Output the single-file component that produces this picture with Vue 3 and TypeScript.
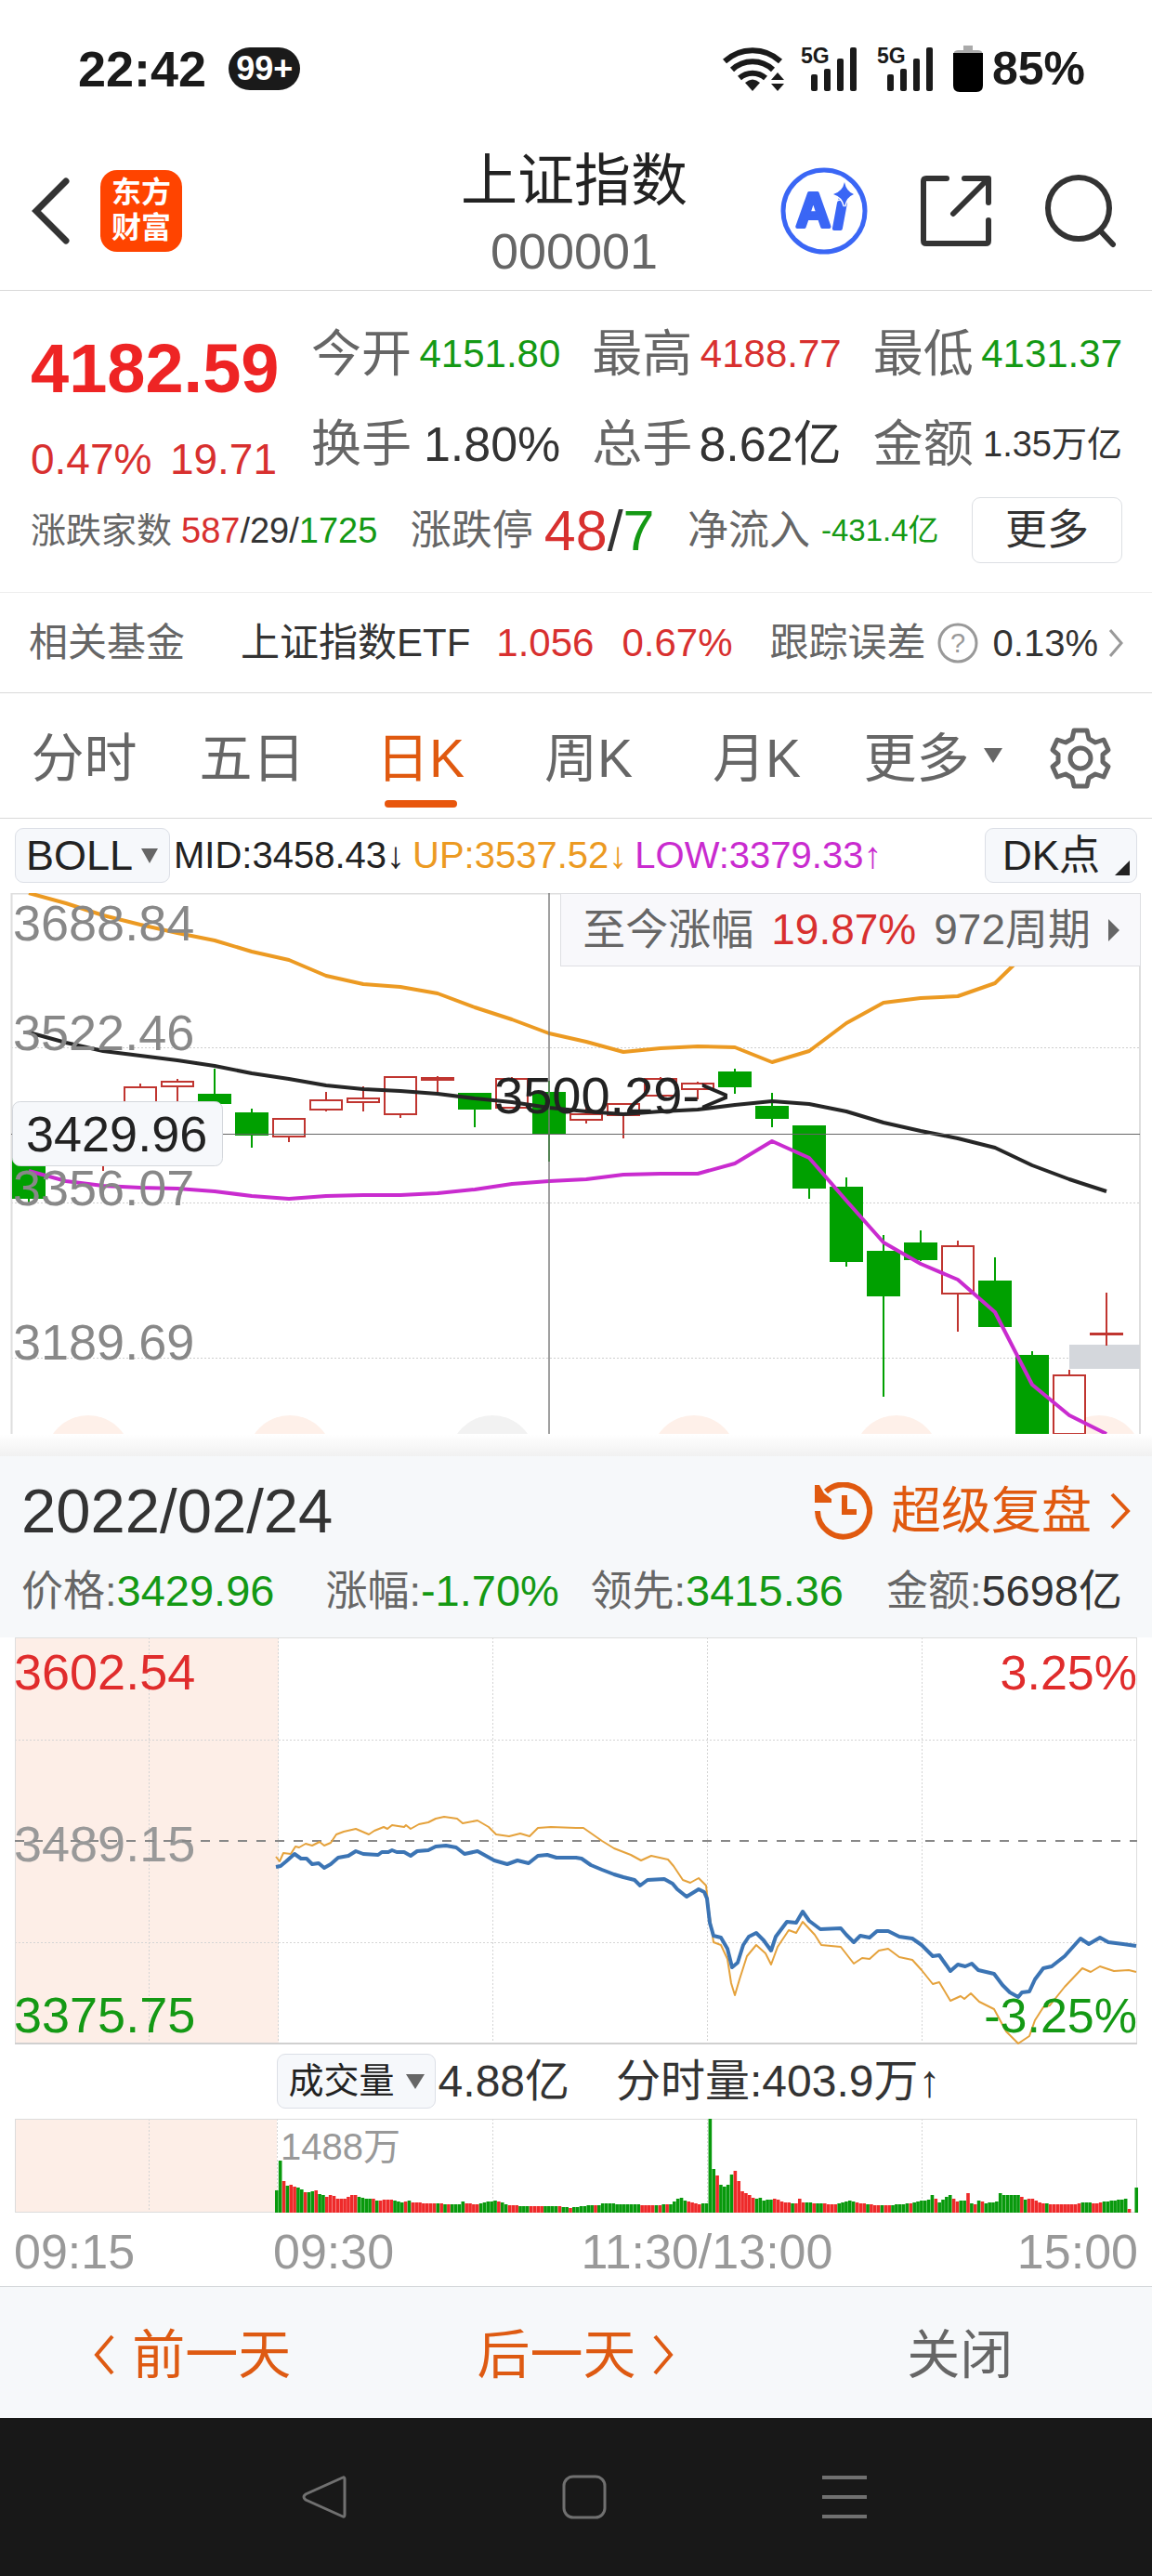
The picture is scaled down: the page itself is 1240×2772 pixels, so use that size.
<script setup lang="ts">
import { ref } from 'vue'

interface Quote { label: string; value: string; tone: string; size: string }
interface Candle { i: number; up: boolean; top: number; bottom: number; high: number; low: number }
interface Bar { x: number; h: number; up: boolean }

const quotes: Quote[] = [
  { label: '今开', value: '4151.80', tone: 'down', size: 'm' },
  { label: '最高', value: '4188.77', tone: 'up', size: 'm' },
  { label: '最低', value: '4131.37', tone: 'down', size: 'm' },
  { label: '换手', value: '1.80%', tone: 'ink', size: 'l' },
  { label: '总手', value: '8.62亿', tone: 'ink', size: 'l' },
  { label: '金额', value: '1.35万亿', tone: 'ink', size: 's' },
]

const tabs = ['分时', '五日', '日K', '周K', '月K']
const activeTab = ref('日K')
const indicator = ref('BOLL')
const subIndicator = ref('成交量')

const dayStats = [
  { label: '价格:', value: '3429.96', tone: 'down' },
  { label: '涨幅:', value: '-1.70%', tone: 'down' },
  { label: '领先:', value: '3415.36', tone: 'down' },
  { label: '金额:', value: '5698亿', tone: 'ink' },
]

/* Daily chart: one slot every 40 units, first slot centred at 31 */
const slotX = (i: number): number => 31 + i * 40
const toPoints = (ys: number[]): string => ys.map((y, i) => `${slotX(i)},${y}`).join(' ')

const candle = (i: number, up: boolean, top: number, bottom: number, high: number, low: number): Candle =>
  ({ i, up, top, bottom, high, low })

const candles: Candle[] = [
  candle(0, false, 1230, 1290, 1226, 1295),
  candle(2, true, 1215, 1240, 1210, 1261),
  candle(3, true, 1171, 1200, 1167, 1204),
  candle(4, true, 1165, 1170, 1162, 1190),
  candle(5, false, 1179, 1188, 1151, 1188),
  candle(6, false, 1199, 1222, 1194, 1236),
  candle(7, true, 1205, 1224, 1205, 1230),
  candle(8, true, 1185, 1195, 1176, 1197),
  candle(9, true, 1183, 1187, 1170, 1197),
  candle(10, true, 1160, 1200, 1160, 1204),
  candle(11, true, 1161, 1163, 1159, 1178),
  candle(12, false, 1178, 1194, 1178, 1214),
  candle(13, true, 1162, 1193, 1160, 1193),
  candle(14, false, 1177, 1221, 1164, 1251),
  candle(15, true, 1200, 1206, 1171, 1210),
  candle(16, true, 1189, 1201, 1189, 1226),
  candle(17, true, 1162, 1180, 1160, 1180),
  candle(18, true, 1167, 1173, 1165, 1184),
  candle(19, false, 1155, 1170, 1151, 1178),
  candle(20, false, 1192, 1204, 1177, 1214),
  candle(21, false, 1213, 1279, 1212, 1291),
  candle(22, false, 1279, 1358, 1268, 1364),
  candle(23, false, 1348, 1395, 1330, 1504),
  candle(24, false, 1339, 1356, 1325, 1358),
  candle(25, true, 1342, 1393, 1336, 1434),
  candle(26, false, 1380, 1428, 1354, 1429),
  candle(27, false, 1460, 1546, 1455, 1546),
  candle(28, true, 1481, 1544, 1475, 1544),
  candle(29, true, 1436, 1437, 1392, 1449),
]

const upperBand = toPoints([
  962, 973, 986, 996, 1005, 1013, 1025, 1034, 1051, 1060, 1063, 1070, 1085, 1098, 1113,
  1122, 1133, 1129, 1127, 1128, 1144, 1132, 1102, 1080, 1075, 1073, 1059, 1020,
])
const middleBand = toPoints([
  1112, 1123, 1132, 1137, 1142, 1148, 1156, 1162, 1169, 1173, 1175, 1178, 1183, 1187, 1193,
  1197, 1200, 1197, 1195, 1190, 1186, 1189, 1197, 1209, 1218, 1226, 1236, 1255, 1270, 1283,
])
const lowerBand = toPoints([
  1261, 1272, 1277, 1279, 1280, 1283, 1288, 1291, 1288, 1287, 1287, 1285, 1281, 1275, 1272,
  1270, 1265, 1264, 1264, 1253, 1229, 1247, 1293, 1338, 1361, 1378, 1413, 1491, 1524, 1544,
])

const markers = [95, 312, 530, 747, 965, 1183]

const leadLine = `297,1998 301,2003 305,1994 313,1995 318,1987 322,1988 329,1984 336,1986 344,1982 349,1986
  356,1983 362,1974 370,1971 383,1968 397,1974 403,1970 413,1966 417,1968 422,1964 435,1966 437,1964 442,1968
  451,1963 461,1961 469,1957 478,1955 492,1957 498,1962 514,1959 526,1966 534,1974 548,1976 560,1973 570,1976
  579,1967 593,1966 620,1967 628,1967 638,1974 648,1981 661,1989 679,1996 690,2002 701,1997 719,2001 725,2008
  735,2023 743,2026 752,2021 760,2029 763,2056 768,2090 776,2093 783,2108 787,2134 791,2147 796,2130 804,2105
  814,2093 824,2102 830,2114 837,2095 849,2077 857,2080 864,2068 877,2082 884,2093 905,2095 919,2113 928,2107
  936,2108 946,2099 956,2097 968,2106 982,2109 992,2120 1004,2135 1011,2133 1023,2153 1034,2148 1038,2151
  1045,2145 1054,2154 1070,2162 1083,2186 1096,2199 1108,2191 1114,2174 1123,2160 1130,2158 1146,2138
  1165,2118 1174,2122 1184,2116 1199,2121 1215,2120 1223,2122`

const priceLine = `297,2009 302,2008 308,2003 317,1995 324,2000 330,2000 336,2006 343,2005 349,2010 356,2006
  364,1999 375,1997 383,1992 391,1995 407,1996 411,1993 418,1993 422,1991 427,1993 435,1993 442,1997 449,1992
  461,1991 469,1987 480,1986 491,1988 500,1995 514,1992 532,2002 546,2006 557,2002 569,2005 579,1997 589,1996
  599,1999 620,1999 626,2000 636,2007 648,2012 661,2017 671,2020 683,2023 689,2029 697,2023 715,2022 724,2027
  729,2033 739,2041 752,2033 758,2036 761,2043 764,2069 768,2083 776,2085 783,2097 788,2117 794,2112 800,2093
  806,2084 814,2080 822,2088 830,2099 835,2084 847,2068 857,2069 864,2057 871,2067 883,2076 905,2075 911,2082
  919,2090 926,2083 936,2085 944,2078 956,2078 968,2084 982,2086 992,2093 1004,2105 1011,2104 1023,2121
  1031,2114 1039,2116 1046,2113 1053,2120 1070,2124 1079,2136 1087,2144 1096,2149 1100,2144 1108,2143
  1114,2130 1123,2118 1132,2116 1146,2105 1163,2086 1172,2092 1184,2085 1193,2090 1209,2092 1223,2094`

/* Minute volumes: [minute, height] knots, filled in between */
const volumeKnots: [number, number][] = [
  [0, 24], [1, 56], [2, 34], [3, 29], [4, 30], [5, 28], [6, 27], [7, 25], [8, 22], [9, 22], [10, 23], [11, 24],
  [12, 20], [13, 19], [14, 17], [15, 19], [16, 18], [17, 15], [19, 15], [20, 17], [21, 19], [22, 19], [23, 17],
  [25, 15], [27, 15], [28, 13], [32, 14], [35, 11], [37, 13], [38, 11], [43, 10], [49, 9], [51, 9], [52, 12],
  [53, 10], [56, 9], [58, 11], [61, 13], [65, 8], [70, 7], [78, 7], [82, 5], [87, 8], [90, 8], [91, 10],
  [97, 9], [105, 8], [110, 9], [112, 15], [113, 16], [114, 13], [118, 9], [120, 10], [121, 101], [122, 47],
  [123, 40], [124, 30], [125, 28], [126, 30], [127, 41], [128, 45], [129, 34], [130, 23], [132, 19], [133, 16],
  [134, 15], [135, 16], [136, 13], [139, 15], [142, 11], [145, 10], [146, 15], [147, 11], [151, 10], [156, 9],
  [160, 13], [163, 10], [167, 8], [171, 8], [177, 10], [179, 12], [182, 14], [183, 19], [184, 15], [185, 11],
  [187, 17], [188, 19], [189, 15], [190, 12], [192, 13], [193, 21], [194, 10], [195, 9], [196, 13], [198, 10],
  [201, 12], [202, 21], [203, 19], [207, 19], [209, 14], [211, 15], [213, 11], [216, 9], [223, 9], [225, 11],
  [229, 10], [231, 12], [234, 13], [237, 15], [238, 4], [239, 0], [240, 27],
]
const risingRuns: [number, number][] = [
  [2, 2], [4, 5], [8, 8], [11, 11], [14, 22], [27, 27], [29, 32], [36, 36], [38, 44], [46, 46], [48, 48],
  [53, 56], [62, 62], [65, 67], [71, 74], [79, 79], [82, 82], [89, 89], [102, 105], [107, 107], [109, 109],
  [115, 118], [123, 123], [128, 133], [139, 143], [145, 147], [150, 150], [153, 156], [162, 164], [166, 168],
  [170, 171], [177, 177], [184, 184], [189, 190], [193, 193], [195, 195], [197, 197], [208, 208], [210, 214],
  [216, 224], [228, 230], [238, 238],
]

function buildBars(): Bar[] {
  const bars: Bar[] = []
  for (let k = 0; k < volumeKnots.length; k++) {
    const [start, h0] = volumeKnots[k]
    const [end, h1] = volumeKnots[k + 1] ?? [start + 1, h0]
    for (let m = start; m < end; m++) {
      const h = Math.round(h0 + ((h1 - h0) * (m - start)) / (end - start))
      bars.push({ x: 296 + m * 3.856, h, up: risingRuns.some(([a, b]) => m >= a && m <= b) })
    }
  }
  return bars
}
const bars = buildBars()
</script>

<template>
  <div class="page">
    <div class="status">
      <span class="clock">22:42</span>
      <span class="count">99+</span>
      <span class="spacer"></span>
      <svg class="wifi" width="66" height="48" viewBox="0 0 66 48" aria-hidden="true">
        <g fill="none" stroke="#1a1a1a" stroke-width="6">
          <path d="M2 16a44 44 0 0 1 60 0" />
          <path d="M10 25a32 32 0 0 1 44 0" />
          <path d="M18 34a21 21 0 0 1 28 0" />
        </g>
        <path d="M24 39q8-7 16 0l-8 9z" fill="#1a1a1a" />
        <path d="M52 36l7-8 7 8zM52 40l7 8 7-8z" fill="#1a1a1a" />
      </svg>
      <svg v-for="n in 2" :key="n" class="signal" width="62" height="56" viewBox="0 -4 62 56" aria-hidden="true">
        <text x="0" y="18" font-size="23" font-weight="700" fill="#1a1a1a">5G</text>
        <rect x="11" y="30" width="7" height="18" rx="2" />
        <rect x="25" y="24" width="7" height="24" rx="2" />
        <rect x="39" y="13" width="7" height="35" rx="2" />
        <rect x="53" y="1" width="7" height="47" rx="2" />
      </svg>
      <svg width="32" height="50" viewBox="0 0 32 50" aria-hidden="true">
        <path d="M11 0h10v5h6q5 0 5 6H0q0-6 5-6h6z" fill="#aaa" />
        <path d="M0 8h32v35q0 7-7 7H7q-7 0-7-7z" fill="#000" />
      </svg>
      <span class="battery">85%</span>
    </div>

    <header class="header">
      <div class="side">
        <button class="icon-btn" aria-label="返回">
          <svg width="42" height="72" viewBox="0 0 42 72"><path d="M37 4L5 36l32 32" fill="none" stroke="#333" stroke-width="7" stroke-linecap="round" /></svg>
        </button>
        <span class="logo">东方<br />财富</span>
      </div>
      <div class="heading">
        <h1>上证指数</h1>
        <span class="code">000001</span>
      </div>
      <div class="side actions">
        <button class="icon-btn" aria-label="Ai">
          <svg width="94" height="96" viewBox="0 0 94 96">
            <circle cx="47" cy="48" r="44" fill="none" stroke="#3a66f5" stroke-width="5" />
            <text x="17" y="65" font-size="51" font-weight="700" fill="#3a66f5" stroke="#3a66f5" stroke-width="4" stroke-linejoin="round">A<tspan x="57" y="67" font-style="italic">i</tspan></text>
            <path d="M69 17q2 10 10 13-8 3-10 13-2-10-12-13 10-3 12-13z" fill="#3a66f5" stroke="#fff" stroke-width="3" paint-order="stroke" />
          </svg>
        </button>
        <button class="icon-btn" aria-label="分享">
          <svg width="78" height="78" viewBox="0 0 78 78">
            <path d="M29 4H7q-3 0-3 3v64q0 3 3 3h64q3 0 3-3V49M48 4h26v26M73 5L36 42" fill="none" stroke="#333" stroke-width="6" stroke-linecap="round" stroke-linejoin="round" />
          </svg>
        </button>
        <button class="icon-btn" aria-label="搜索">
          <svg width="78" height="80" viewBox="0 0 78 80">
            <g fill="none" stroke="#333" stroke-width="6" stroke-linecap="round"><circle cx="37" cy="37" r="33" /><path d="M60 61l14 15" /></g>
          </svg>
        </button>
      </div>
    </header>

    <section class="quote">
      <div class="quote-top">
        <div class="last">
          <strong>4182.59</strong>
          <div class="delta"><span>0.47%</span><span>19.71</span></div>
        </div>
        <div class="quote-grid">
          <div v-for="q in quotes" :key="q.label" class="pair">
            <span class="label">{{ q.label }}</span>
            <span :class="[q.tone, 'val-' + q.size]">{{ q.value }}</span>
          </div>
        </div>
      </div>
      <div class="quote-bottom">
        <div class="pair breadth">
          <span class="label">涨跌家数</span>
          <span><span class="up">587</span>/29/<span class="down">1725</span></span>
        </div>
        <div class="pair limit">
          <span class="label">涨跌停</span>
          <span class="limit-value"><span class="up">48</span>/<span class="down">7</span></span>
        </div>
        <div class="pair limit">
          <span class="label">净流入</span>
          <span class="inflow down">-431.4亿</span>
        </div>
        <button class="more">更多</button>
      </div>
    </section>

    <a class="fund" href="#">
      <span class="label">相关基金</span>
      <span class="fund-name">上证指数ETF</span>
      <span class="up">1.056</span>
      <span class="up">0.67%</span>
      <span class="track label">跟踪误差</span>
      <svg width="44" height="44" viewBox="0 0 44 44" aria-hidden="true">
        <circle cx="22" cy="22" r="20" fill="none" stroke="#999" stroke-width="3" />
        <text x="22" y="32" text-anchor="middle" font-size="29" fill="#999">?</text>
      </svg>
      <span class="error">0.13%</span>
      <svg width="18" height="32" viewBox="0 0 18 32" aria-hidden="true"><path d="M3 2l12 14L3 30" fill="none" stroke="#999" stroke-width="3" /></svg>
    </a>

    <nav class="tabs">
      <button v-for="t in tabs" :key="t" class="tab" :class="{ active: t === activeTab }" @click="activeTab = t">{{ t }}</button>
      <button class="tab tab-more">
        更多
        <svg width="20" height="16" viewBox="0 0 20 16" aria-hidden="true"><path d="M0 0h20L10 16z" fill="#666" /></svg>
      </button>
      <button class="icon-btn gear" aria-label="设置">
        <svg width="68" height="68" viewBox="-34 -34 68 68">
          <path d="M-7-30H7L9-21 16-17 25-20 30-9 24-4V4L30 9 25 20 16 17 9 21 7 30H-7L-9 21-16 17-25 20-30 9-24 4V-4L-30-9-25-20-16-17-9-21Z" fill="none" stroke="#666" stroke-width="5" stroke-linejoin="round" />
          <circle r="11" fill="none" stroke="#666" stroke-width="5" />
        </svg>
      </button>
    </nav>

    <div class="indicators">
      <label class="picker boll">
        <select v-model="indicator" aria-label="主图指标"><option>BOLL</option><option>MA</option></select>
        <svg width="18" height="16" viewBox="0 0 18 16" aria-hidden="true"><path d="M0 0h18L9 16z" fill="#666" /></svg>
      </label>
      <div class="bands">
        <span class="mid">MID:3458.43↓</span>
        <span class="upper">UP:3537.52↓</span>
        <span class="lower">LOW:3379.33↑</span>
      </div>
      <button class="picker dk">
        DK点
        <svg width="16" height="16" viewBox="0 0 16 16" aria-hidden="true"><path d="M16 0v16H0z" fill="#222" /></svg>
      </button>
    </div>

    <div class="kchart">
      <svg viewBox="0 962 1240 582" role="img" aria-label="日K线图">
        <circle v-for="(x, i) in markers" :key="x" :cx="x" cy="1570" r="46" :fill="i === 2 ? '#f2f2f2' : '#fef0e9'" />
        <g stroke="#cfcfcf" stroke-width="1" stroke-dasharray="2 2">
          <path d="M12 1128.5H1227M12 1295.5H1227M12 1462.5H1227" />
        </g>
        <path d="M12.5 1544V962.5H1227V1544" fill="none" stroke="#dedede" stroke-width="2" />
        <rect x="1151" y="1448" width="76" height="26" fill="#d4d7dc" />
        <g v-for="c in candles" :key="c.i" :stroke="c.up ? '#c03530' : '#00a000'" stroke-width="2">
          <path v-if="c.high < c.top" :d="`M${slotX(c.i)} ${c.high}V${c.top}`" />
          <path v-if="c.low > c.bottom" :d="`M${slotX(c.i)} ${c.bottom}V${c.low}`" />
          <rect :x="slotX(c.i) - 17" :y="c.top" width="34" :height="c.bottom - c.top" :fill="c.up ? '#fff' : '#00a000'" />
        </g>
        <g fill="none" stroke-width="4" stroke-linejoin="round">
          <polyline :points="upperBand" stroke="#ec9a22" />
          <polyline :points="middleBand" stroke="#262626" />
          <polyline :points="lowerBand" stroke="#c92bcf" />
        </g>
        <path d="M591 962V1544" stroke="#777" stroke-opacity=".7" stroke-width="2" />
        <path d="M12 1221.5H1227" stroke="#666" stroke-width="1" />
        <g font-size="54" fill="#888">
          <text x="14" y="1013">3688.84</text>
          <text x="14" y="1131">3522.46</text>
          <text x="14" y="1298">3356.07</text>
          <text x="14" y="1464">3189.69</text>
        </g>
        <text x="532" y="1199" font-size="56" fill="#222">3500.29-&gt;</text>
        <rect x="13.5" y="1186.5" width="226" height="69" rx="8" fill="#f6f8fb" stroke="#d4d7dc" />
        <text x="28" y="1240" font-size="54" fill="#222">3429.96</text>
      </svg>
      <button class="since">
        <span>至今涨幅</span>
        <span class="up">19.87%</span>
        <span>972周期</span>
        <svg width="12" height="24" viewBox="0 0 12 24" aria-hidden="true"><path d="M0 0l12 12L0 24z" fill="#666" /></svg>
      </button>
    </div>

    <div class="fade"></div>

    <section class="sheet">
      <div class="sheet-head">
        <span class="date">2022/02/24</span>
        <a class="replay" href="#">
          <svg width="62" height="62" viewBox="0 0 62 62" aria-hidden="true">
            <path d="M3 31a28 28 0 1 0 9-21" fill="none" stroke="#e0590f" stroke-width="6" />
            <path d="M0 3h5l5 9 8 6v4H0z" fill="#e0590f" />
            <path d="M32 14v18h13" fill="none" stroke="#e0590f" stroke-width="6" />
          </svg>
          <span>超级复盘</span>
          <svg width="22" height="40" viewBox="0 0 22 40" aria-hidden="true"><path d="M2 2l17 18L2 38" fill="none" stroke="#e0590f" stroke-width="4" /></svg>
        </a>
      </div>
      <div class="sheet-stats">
        <div v-for="s in dayStats" :key="s.label"><span class="label">{{ s.label }}</span><span class="num" :class="s.tone">{{ s.value }}</span></div>
      </div>
    </section>

    <svg class="plot" viewBox="0 1762 1240 438" role="img" aria-label="分时走势图">
      <rect x="16" y="1762" width="284" height="437" fill="#fdeee7" />
      <g stroke="#d4d4d4" stroke-width="1" stroke-dasharray="2 2">
        <path d="M16 1872.5H1224M16 2090.5H1224M160.5 1762V2199M299.5 1762V2199M530.5 1762V2199M761.5 1762V2199M992.5 1762V2199" />
      </g>
      <path d="M16 1762.5H1224M16.5 1762V2199M1223.5 1762V2199" stroke="#dedede" />
      <path d="M16 2199H1224" stroke="#d0d0d0" stroke-width="2" />
      <g font-size="54">
        <text x="15" y="1818" fill="#e02c2c">3602.54</text>
        <text x="15" y="2003" fill="#999">3489.15</text>
        <text x="15" y="2187" fill="#149914">3375.75</text>
      </g>
      <path d="M16 1981H1224" stroke="#888" stroke-width="2" stroke-dasharray="10 10" />
      <polyline :points="leadLine" fill="none" stroke="#e5a23c" stroke-width="2" stroke-linejoin="round" />
      <polyline :points="priceLine" fill="none" stroke="#3b74b4" stroke-width="4" stroke-linejoin="round" />
      <g font-size="52" text-anchor="end">
        <text x="1224" y="1818" fill="#e02c2c">3.25%</text>
        <text x="1224" y="2187" fill="#149914">-3.25%</text>
      </g>
    </svg>

    <div class="volume-row">
      <label class="picker vol">
        <select v-model="subIndicator" aria-label="副图指标"><option>成交量</option><option>MACD</option></select>
        <svg width="20" height="16" viewBox="0 0 20 16" aria-hidden="true"><path d="M0 0h20L10 16z" fill="#666" /></svg>
      </label>
      <span class="vol-total">4.88亿</span>
      <span>分时量:403.9万↑</span>
    </div>

    <svg class="plot" viewBox="0 2280 1240 180" role="img" aria-label="成交量图">
      <rect x="16" y="2280" width="282" height="101" fill="#fdeee7" />
      <g stroke="#d4d4d4" stroke-width="1" stroke-dasharray="2 2">
        <path d="M160.5 2280V2381M298.5 2280V2381M530.5 2280V2381M761.5 2280V2381M992.5 2280V2381" />
      </g>
      <rect x="16.5" y="2280.5" width="1207" height="100" fill="none" stroke="#dcdcdc" />
      <rect v-for="b in bars" :key="b.x" :x="b.x" :y="2381 - b.h" width="3.6" :height="b.h" :fill="b.up ? '#ee2a2a' : '#08990c'" />
      <text x="302" y="2324" font-size="40" fill="#999">1488万</text>
      <g font-size="52" fill="#999">
        <text x="15" y="2441">09:15</text>
        <text x="294" y="2441">09:30</text>
        <text x="761" y="2441" text-anchor="middle">11:30/13:00</text>
        <text x="1225" y="2441" text-anchor="end">15:00</text>
      </g>
    </svg>

    <div class="day-nav">
      <button class="go">
        <svg width="24" height="44" viewBox="0 0 24 44" aria-hidden="true"><path d="M21 2L4 22l17 20" fill="none" stroke="#de5a12" stroke-width="4" /></svg>
        前一天
      </button>
      <button class="go">
        后一天
        <svg width="24" height="44" viewBox="0 0 24 44" aria-hidden="true"><path d="M3 2l17 20L3 42" fill="none" stroke="#de5a12" stroke-width="4" /></svg>
      </button>
      <button>关闭</button>
    </div>

    <nav class="system">
      <button class="icon-btn" aria-label="后退">
        <svg width="48" height="48" viewBox="0 0 48 48"><path d="M44 3q2-1 2 2v38q0 3-2 2L4 27q-4-3 0-6z" fill="none" stroke="#707070" stroke-width="3" /></svg>
      </button>
      <button class="icon-btn" aria-label="主页">
        <svg width="48" height="48" viewBox="0 0 48 48"><rect x="2" y="2" width="44" height="44" rx="10" fill="none" stroke="#707070" stroke-width="3" /></svg>
      </button>
      <button class="icon-btn" aria-label="最近任务">
        <svg width="48" height="48" viewBox="0 0 48 48"><path d="M0 3h48M0 24h48M0 45h48" stroke="#707070" stroke-width="4" /></svg>
      </button>
    </nav>
  </div>
</template>

<style>
body { background: #fff; }
</style>

<style scoped>
.page {
  font-family: "Liberation Sans", "Noto Sans CJK SC", sans-serif;
  color: #333;
  background: #fff;
  font-size: 42px;
  line-height: 66px;
  white-space: nowrap;
}
svg { display: block; flex: none; }
button, select {
  font: inherit;
  color: inherit;
  background: none;
  border: 0;
  padding: 0;
  margin: 0;
}
a { color: inherit; text-decoration: none; }
.icon-btn { display: block; line-height: 0; }
.up { color: #d8302f; }
.down { color: #149914; }
.ink { color: #333; }
.label { color: #666; }

.status {
  display: flex;
  align-items: center;
  padding: 44px 72px 46px 84px;
  line-height: 60px;
  color: #1a1a1a;
  font-weight: 700;
}
.clock { font-size: 54px; }
.count {
  margin-left: 24px;
  padding: 0 8px;
  border-radius: 23px;
  background: #1a1a1a;
  color: #fff;
  font-size: 36px;
  line-height: 46px;
}
.spacer { flex: 1; }
.wifi { margin-right: 18px; }
.signal { margin-right: 20px; fill: #1a1a1a; }
.battery { margin-left: 10px; font-size: 50px; }

.header {
  display: grid;
  grid-template-columns: 1fr auto 1fr;
  align-items: center;
  padding: 4px 38px 12px 34px;
  border-bottom: 1px solid #d9d9d9;
}
.side { display: flex; align-items: center; gap: 32px; }
.actions { justify-content: flex-end; gap: 56px; }
.logo {
  padding: 5px 12px 7px;
  border-radius: 18px;
  background: #ff4400;
  color: #fff;
  font-size: 32px;
  line-height: 38px;
  font-weight: 700;
}
.heading { display: flex; flex-direction: column; align-items: center; gap: 9px; padding-top: 5px; }
h1 { margin: 0; font-size: 61px; line-height: 72px; font-weight: 400; color: #222; }
.code { font-size: 54px; line-height: 60px; color: #666; }

.quote { padding: 35px 32px 31px 33px; border-bottom: 1px solid #eee; }
.quote-top { display: flex; justify-content: space-between; }
.last { width: 265px; padding-top: 7px; color: #d8302f; }
.last strong { display: block; font-size: 74px; line-height: 84px; color: #ee2424; }
.delta { display: flex; justify-content: space-between; margin-top: 25px; font-size: 46px; line-height: 60px; }
.quote-grid {
  display: grid;
  grid-template-columns: repeat(3, 1fr);
  gap: 31px 34px;
  width: 873px;
  align-content: start;
}
.pair { display: flex; justify-content: space-between; align-items: center; }
.quote-grid .label { font-size: 54px; }
.val-s { font-size: 38px; }
.val-m { font-size: 42px; }
.val-l { font-size: 52px; }
.quote-bottom { display: flex; justify-content: space-between; align-items: center; margin-top: 11px; }
.breadth { gap: 10px; font-size: 38px; }
.limit { gap: 12px; font-size: 44px; }
.limit-value { font-size: 61px; }
.inflow { font-size: 33px; }
.more {
  padding: 0 35px;
  border: 1px solid #dcdfe3;
  border-radius: 9px;
  font-size: 45px;
  line-height: 69px;
}

.fund { display: flex; align-items: center; padding: 21px 30px 20px 31px; border-bottom: 1px solid #d9d9d9; }
.fund-name { margin: 0 28px 0 60px; }
.fund .up + .up { margin-left: 30px; }
.track { margin: 0 12px 0 auto; }
.error { margin: 0 10px 0 16px; font-size: 40px; }

.tabs { display: flex; padding: 35px 0 11px; border-bottom: 1px solid #d9d9d9; color: #666; }
.tab { flex: 181 1 0; font-size: 57px; line-height: 70px; }
.tab::after { content: ""; display: block; width: 78px; height: 8px; margin: 10px auto 0; border-radius: 4px; }
.active { color: #e0590f; }
.active::after { background: #e8560c; }
.tab-more { text-indent: 18px; }
.tab-more svg { display: inline-block; vertical-align: 15px; }
.gear { flex: 154 1 0; }
.gear svg { margin: -18px auto 0; }

.indicators { display: flex; align-items: center; padding: 10px 16px 11px; }
.picker {
  display: flex;
  align-items: center;
  border: 1px solid #dcdfe6;
  border-radius: 9px;
  background: #f6f8fb;
  color: #222;
  line-height: 57px;
}
.picker select { appearance: none; line-height: 57px; height: 57px; }
.boll { padding: 0 12px 0 11px; font-size: 45px; }
.boll select { width: 124px; }
.dk { padding: 0 7px 0 18px; gap: 16px; font-size: 44px; }
.dk svg { align-self: flex-end; margin-bottom: 7px; }
.bands { display: flex; flex: 1; gap: 8px; padding-left: 4px; font-size: 40px; line-height: 59px; }
.mid { color: #222; }
.upper { color: #ec9a22; }
.lower { color: #c92bcf; }

.kchart { position: relative; }
.kchart > svg, .plot { width: 100%; height: auto; }
.since {
  position: absolute;
  top: 0;
  right: 12px;
  display: flex;
  align-items: center;
  gap: 19px;
  padding: 0 22px 0 23px;
  border: 1px solid #dedfe3;
  background: #f8f8fb;
  color: #666;
  font-size: 46px;
  line-height: 77px;
}
.fade { height: 24px; background: linear-gradient(#fff, #f1f1f1); }

.sheet { padding: 24px 32px 16px 23px; background: #f6f8fa; }
.sheet-head { display: flex; justify-content: space-between; align-items: center; line-height: 70px; margin-bottom: 18px; }
.date { font-size: 67px; }
.replay { display: flex; align-items: center; gap: 20px; color: #e0590f; font-size: 54px; margin-right: -9px; }
.sheet-stats { display: grid; grid-template-columns: 326fr 284fr 317fr auto; font-size: 45px; }
.num { font-size: 47px; }

.volume-row { display: flex; align-items: center; padding: 10px 0 11px 24%; font-size: 48px; line-height: 59px; }
.vol { padding: 0 11px 0 12px; font-size: 38px; }
.vol select { width: 126px; }
.vol-total { margin: 0 50px 0 3px; }

.day-nav {
  display: flex;
  padding: 40px 0 35px;
  border-top: 1px solid #d4d7da;
  background: #f6f8fa;
  font-size: 57px;
  color: #666;
}
.day-nav button { flex: 1 1 0; display: flex; align-items: center; justify-content: center; gap: 18px; }
.day-nav .go { color: #de5a12; }

.system { display: flex; justify-content: center; gap: 232px; padding: 61px 0 62px; background: #181818; }
.system button:last-child { margin-right: -18px; }
</style>
